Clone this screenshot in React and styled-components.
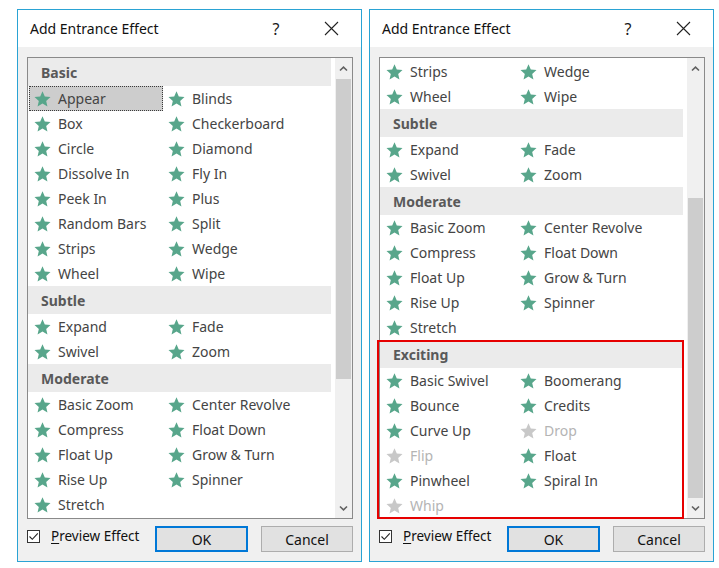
import React from 'react';
import styled, { createGlobalStyle } from 'styled-components';

const Global = createGlobalStyle`
  html, body { margin: 0; padding: 0; background: #ffffff; }
  body { font-family: "Noto Sans", "Open Sans", sans-serif; -webkit-font-smoothing: antialiased; }
`;

const SECTIONS = [
  {
    name: 'Basic',
    items: [
      ['Appear'], ['Blinds'], ['Box'], ['Checkerboard'], ['Circle'], ['Diamond'],
      ['Dissolve In'], ['Fly In'], ['Peek In'], ['Plus'], ['Random Bars'], ['Split'],
      ['Strips'], ['Wedge'], ['Wheel'], ['Wipe'],
    ],
  },
  { name: 'Subtle', items: [['Expand'], ['Fade'], ['Swivel'], ['Zoom']] },
  {
    name: 'Moderate',
    items: [
      ['Basic Zoom'], ['Center Revolve'], ['Compress'], ['Float Down'], ['Float Up'],
      ['Grow & Turn'], ['Rise Up'], ['Spinner'], ['Stretch'],
    ],
  },
  {
    name: 'Exciting',
    items: [
      ['Basic Swivel'], ['Boomerang'], ['Bounce'], ['Credits'], ['Curve Up'], ['Drop', true],
      ['Flip', true], ['Float'], ['Pinwheel'], ['Spiral In'], ['Whip', true],
    ],
  },
];

const Page = styled.div`
  display: flex;
  gap: 7px;
  padding: 9px 0 0 17px;
`;

const Dialog = styled.div`
  width: 343px;
  height: 551px;
  border: 1px solid #2aa3d4;
  background: #f0f0f0;
  display: flex;
  flex-direction: column;
`;

const TitleBar = styled.div`
  height: 37px;
  background: #ffffff;
  display: flex;
  align-items: center;
  padding: 0 15px 0 12px;
`;

const Title = styled.div`
  flex: 1;
  font-size: 14px;
  color: #111;
  padding-bottom: 1px;
`;

const TitleButton = styled.div`
  width: 30px;
  height: 30px;
  display: flex;
  align-items: center;
  justify-content: center;
  font-size: 16px;
  color: #1a1a1a;
  margin-left: ${(p) => p.$gap || 0}px;
`;

const Body = styled.div`
  flex: 1;
  display: flex;
  flex-direction: column;
  padding: 10px 8px 0 9px;
`;

const ListBox = styled.div`
  height: 460px;
  border: 1px solid #8a8a8a;
  background: #ffffff;
  display: flex;
`;

const Viewport = styled.div`
  flex: 1;
  margin-right: 4px;
  padding-top: ${(p) => p.$top || 0}px;
`;

const Section = styled.div`
  position: relative;
  ${(p) =>
    p.$highlight &&
    `&::after {
      content: '';
      position: absolute;
      top: 0px;
      bottom: -1px;
      left: -3px;
      right: -1px;
      border: 2px solid #e60000;
      pointer-events: none;
    }`}
`;

const SectionHeader = styled.div`
  height: 28px;
  background: #ebebeb;
  display: flex;
  align-items: center;
  padding-left: 13px;
  font-size: 14px;
  font-weight: 700;
  color: #595959;
`;

const ItemGrid = styled.div`
  display: grid;
  grid-template-columns: 134px 134px;
  padding-left: 1px;
`;

const Item = styled.div`
  height: 25px;
  box-sizing: border-box;
  display: flex;
  align-items: center;
  gap: 7px;
  padding-left: 5px;
  font-size: 14px;
  color: ${(p) => (p.$disabled ? '#b4b4b4' : '#444444')};
  background: ${(p) => (p.$selected ? '#cdcdcd' : 'transparent')};
  outline: ${(p) => (p.$selected ? '1px dotted #3a3a3a' : 'none')};
  outline-offset: -1px;
`;

const ScrollBar = styled.div`
  width: 17px;
  background: #f0f0f0;
  display: flex;
  flex-direction: column;
`;

const ArrowButton = styled.div`
  height: ${(p) => p.$h}px;
  display: flex;
  align-items: center;
  justify-content: center;
`;

const Track = styled.div`
  flex: 1;
  display: flex;
  flex-direction: column;
`;

const Thumb = styled.div`
  height: 300px;
  margin: 0 1px;
  background: #cdcdcd;
`;

const Footer = styled.div`
  display: flex;
  align-items: flex-start;
  margin-top: 7px;
`;

const CheckLabel = styled.label`
  width: 128px;
  display: flex;
  align-items: center;
  gap: 11px;
  padding-top: 1px;
  font-size: 13.5px;
  color: #111;
`;

const Box = styled.span`
  width: 11px;
  height: 11px;
  border: 1px solid #333;
  background: #fff;
  display: flex;
  align-items: center;
  justify-content: center;
`;

const Underline = styled.span`
  text-decoration: underline;
  text-underline-offset: 2px;
`;

const Button = styled.div`
  width: ${(p) => p.$w}px;
  height: 26px;
  box-sizing: border-box;
  margin-left: ${(p) => p.$ml || 0}px;
  border: ${(p) => (p.$primary ? '2px solid #0078d7' : '1px solid #adadad')};
  background: #e1e1e1;
  display: flex;
  align-items: center;
  justify-content: center;
  font-size: 14px;
  color: #111;
`;

const Star = ({ disabled }) => (
  <svg width="17" height="16" viewBox="0 0 24 23">
    <polygon
      points="12,0.5 15.3,8 23.5,8.8 17.3,14.2 19.1,22.3 12,18.1 4.9,22.3 6.7,14.2 0.5,8.8 8.7,8"
      fill={disabled ? '#c8c8c8' : '#58a68b'}
    />
  </svg>
);

const Chevron = ({ down }) => (
  <svg width="9" height="6" viewBox="0 0 9 6">
    <path
      d={down ? 'M1 1.5 L4.5 4.8 L8 1.5' : 'M1 4.5 L4.5 1.2 L8 4.5'}
      fill="none"
      stroke="#606060"
      strokeWidth="1.6"
    />
  </svg>
);

const CloseIcon = () => (
  <svg width="15" height="15" viewBox="0 0 15 15">
    <path d="M1 1 L14 14 M14 1 L1 14" stroke="#222" strokeWidth="1.1" />
  </svg>
);

const CheckMark = () => (
  <svg width="11" height="11" viewBox="0 0 11 11">
    <path d="M1.5 5.5 L4.3 8.3 L9.8 2.3" fill="none" stroke="#222" strokeWidth="1.1" />
  </svg>
);

const MAX_SCROLL = 177;
const THUMB_RANGE = 119;

function EffectList({ view }) {
  return (
    <ListBox>
      <Viewport $top={view.top}>
        {view.sections.map(({ index, from = 0, header = true, highlight }) => {
          const sec = SECTIONS[index];
          return (
            <Section key={sec.name} $highlight={highlight}>
              {header && <SectionHeader>{sec.name}</SectionHeader>}
              <ItemGrid>
                {sec.items.slice(from).map(([label, disabled]) => (
                  <Item
                    key={label}
                    $disabled={disabled}
                    $selected={view.selected === label}
                  >
                    <Star disabled={disabled} />
                    {label}
                  </Item>
                ))}
              </ItemGrid>
            </Section>
          );
        })}
      </Viewport>
      <ScrollBar>
        <ArrowButton $h={21}>
          <Chevron />
        </ArrowButton>
        <Track>
          <Thumb style={{ marginTop: Math.round((view.scroll / MAX_SCROLL) * THUMB_RANGE) }} />
        </Track>
        <ArrowButton $h={20}>
          <Chevron down />
        </ArrowButton>
      </ScrollBar>
    </ListBox>
  );
}

function EffectDialog({ view }) {
  return (
    <Dialog>
      <TitleBar>
        <Title>Add Entrance Effect</Title>
        <TitleButton>?</TitleButton>
        <TitleButton $gap={25}>
          <CloseIcon />
        </TitleButton>
      </TitleBar>
      <Body>
        <EffectList view={view} />
        <Footer>
          <CheckLabel>
            <Box>
              <CheckMark />
            </Box>
            <span>
              <Underline>P</Underline>review Effect
            </span>
          </CheckLabel>
          <Button $primary $w={93}>OK</Button>
          <Button $w={92} $ml={13}>Cancel</Button>
        </Footer>
      </Body>
    </Dialog>
  );
}

const VIEWS = [
  {
    scroll: 0,
    top: 0,
    selected: 'Appear',
    sections: [{ index: 0 }, { index: 1 }, { index: 2 }],
  },
  {
    scroll: 177,
    top: 1,
    sections: [
      { index: 0, from: 12, header: false },
      { index: 1 },
      { index: 2 },
      { index: 3, highlight: true },
    ],
  },
];

export default function App() {
  return (
    <>
      <Global />
      <Page>
        {VIEWS.map((v, i) => (
          <EffectDialog key={i} view={v} />
        ))}
      </Page>
    </>
  );
}
